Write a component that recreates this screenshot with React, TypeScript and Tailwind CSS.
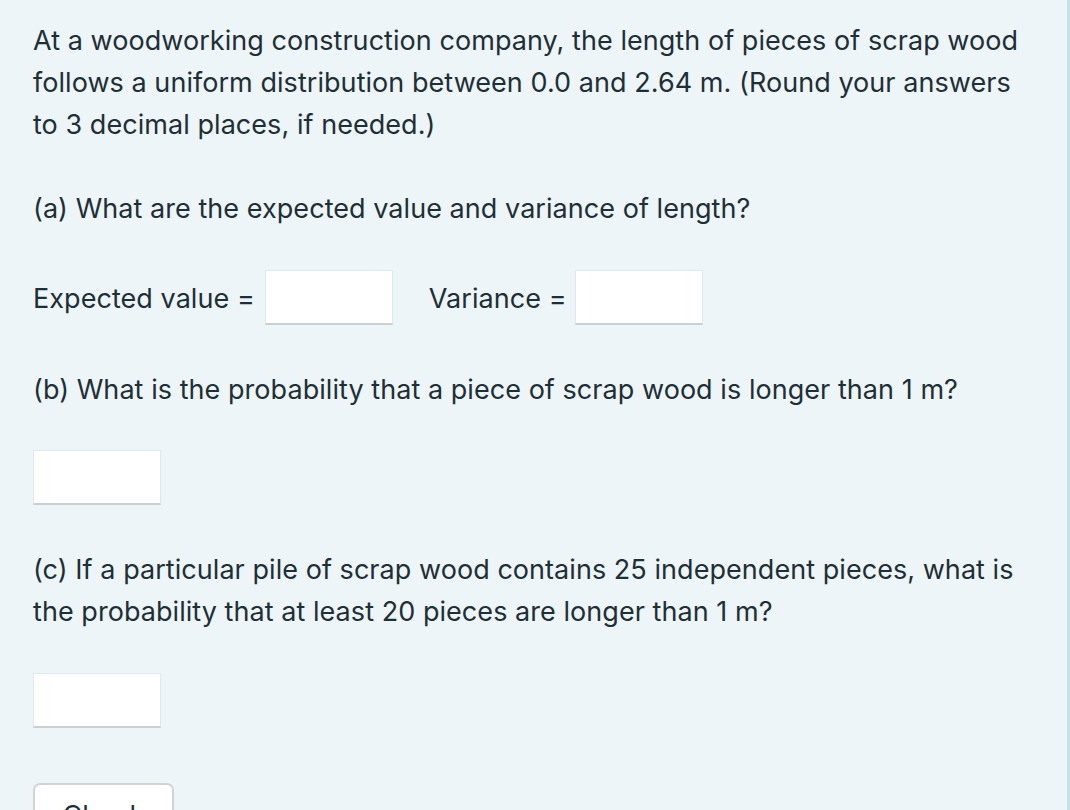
const FONT = "font-['Inter','Helvetica_Neue',Arial,sans-serif]";

function AnswerBox({ className = '' }: { className?: string }) {
  return (
    <input
      type="text"
      className={`h-[55px] w-[128px] bg-white border border-[#dde9ee] border-b-2 border-b-[#c9cfd2] outline-none ${className}`}
    />
  );
}

export default function App() {
  return (
    <div className={`min-h-[810px] w-[1070px] bg-[#edf5f9] border-r-[3px] border-r-[#c3e1ec] text-[#1f2f36] ${FONT}`}>
      <div className="pl-[33px] pt-[20px] pr-[20px] text-[27px] leading-[42px] tracking-[0.05px]">
        <p className="whitespace-nowrap">
          At a woodworking construction company, the length of pieces of scrap wood
          <br />
          follows a uniform distribution between 0.0 and 2.64 m. (Round your answers
          <br />
          to 3 decimal places, if needed.)
        </p>

        <p className="mt-[42px]">(a) What are the expected value and variance of length?</p>

        <div className="mt-[40px] flex items-center">
          <span className="pt-[3px]">Expected value =</span>
          <AnswerBox className="ml-[10px]" />
          <span className="ml-[36px] pt-[3px]">Variance =</span>
          <AnswerBox className="ml-[8px]" />
        </div>

        <p className="mt-[44px]">(b) What is the probability that a piece of scrap wood is longer than 1 m?</p>

        <AnswerBox className="mt-[39px] block" />

        <p className="mt-[44px] whitespace-nowrap">
          (c) If a particular pile of scrap wood contains 25 independent pieces, what is
          <br />
          the probability that at least 20 pieces are longer than 1 m?
        </p>

        <AnswerBox className="mt-[40px] block" />

        <button className="mt-[55px] w-[141px] h-[50px] rounded-[7px] border-2 border-[#d2d4d4] bg-white text-[27px] leading-[42px] pt-[10px] text-[#1f2f36]">
          Check
        </button>
      </div>
    </div>
  );
}
